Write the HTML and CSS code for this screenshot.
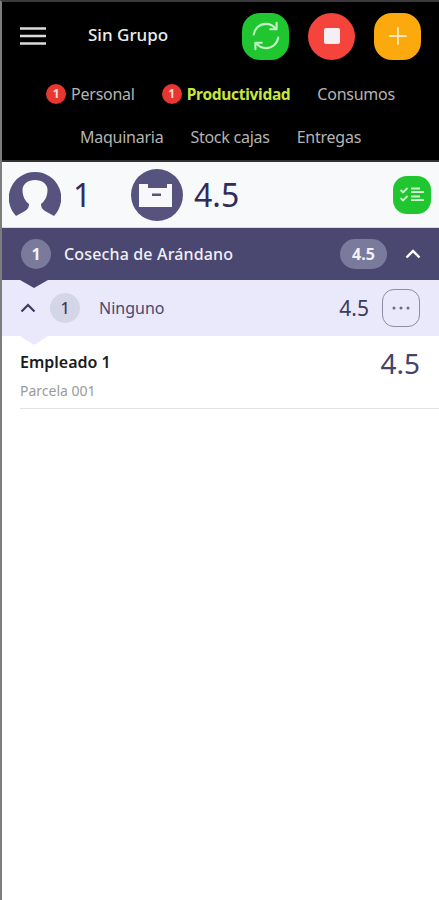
FILE: index.html
```html
<!DOCTYPE html>
<html lang="es">
<head>
    <meta charset="UTF-8">
    <meta name="viewport" content="width=device-width, initial-scale=1.0">
    <title>Sin Grupo</title>
    <link rel="stylesheet" href="styles.css">
</head>
<body>
    <div class="page">
        <header class="topbar">
            <div class="toolbar">
                <button class="menu-btn" aria-label="Menu">
                    <svg width="26" height="18" viewBox="0 0 26 18"><path d="M0 1.500h26M0 9h26M0 16.500h26" stroke="#dcdcdc" stroke-width="2.600" fill="none"/></svg>
                </button>
                <span class="group-name">Sin Grupo</span>
                <div class="actions">
                    <button class="squircle green" aria-label="Sincronizar">
                        <svg width="34" height="34" viewBox="0 0 32 32" fill="none" stroke="#c4f2c6" stroke-width="2" stroke-linecap="round" stroke-linejoin="round"><path d="M4.500 14.500C5.500 8.500 10.200 4.600 16 4.600c3.600 0 6.600 1.500 8.800 4.200"/><path d="M26 3.600v6h-6"/><path d="M27.500 17.500c-1 6-5.700 9.900-11.500 9.900-3.600 0-6.600-1.500-8.800-4.200"/><path d="M6 28.400v-6h6"/></svg>
                    </button>
                    <button class="round red" aria-label="Detener"><span class="stop"></span></button>
                    <button class="squircle orange" aria-label="Agregar">
                        <svg width="18" height="18" viewBox="0 0 18 18"><path d="M9 1v16M1 9h16" stroke="#ffe9b8" stroke-width="1.800" stroke-linecap="round"/></svg>
                    </button>
                </div>
            </div>
            <nav class="tabs">
                <div class="tab-row">
                    <a class="tab"><span class="dot">1</span>Personal</a>
                    <a class="tab active"><span class="dot">1</span>Productividad</a>
                    <a class="tab">Consumos</a>
                </div>
                <div class="tab-row second">
                    <a class="tab">Maquinaria</a>
                    <a class="tab">Stock cajas</a>
                    <a class="tab">Entregas</a>
                </div>
            </nav>
        </header>

        <section class="totals">
            <svg class="avatar" width="52" height="46" viewBox="0 0 52 46">
                <path fill="#56537f" d="M26 0A26 26 0 0 1 45 44L36 39C33 37 32 35 32 32C36 29 38.500 24 38.500 18C38.500 12 33 8 26 8C19 8 13.500 12 13.500 18C13.500 24 16 29 20 32C20 35 19 37 16 39L7 44A26 26 0 0 1 26 0z"/>
            </svg>
            <span class="total-num first">1</span>
            <svg class="box" width="52" height="52" viewBox="0 0 52 52">
                <circle cx="26" cy="26" r="26" fill="#56537f"/>
                <path fill="#f8f8fb" d="M8 15h9v4h19v-4h5v23H8z"/>
                <rect x="21" y="24.500" width="9" height="2.500" fill="#56537f"/>
            </svg>
            <span class="total-num">4.5</span>
            <button class="squircle list-btn" aria-label="Lista">
                <svg width="24" height="15" viewBox="0 0 24 15" fill="none" stroke="#cdf3cf" stroke-width="1.800"><path d="M0.500 3l2.500 2.500L7.500 1M0.500 11l2.500 2.500L7.500 9"/><path d="M11 1.500h9M11 5h13M11 9.500h9M11 13h13"/></svg>
            </button>
        </section>

        <section class="crop-row">
            <span class="count light">1</span>
            <span class="crop-name">Cosecha de Arándano</span>
            <span class="pill">4.5</span>
            <svg class="chevron" width="16" height="10" viewBox="0 0 16 10"><path d="M1.500 8.500L8 2l6.500 6.500" stroke="#fff" stroke-width="2.400" fill="none"/></svg>
        </section>

        <section class="sub-row">
            <svg class="sub-chevron" width="16" height="10" viewBox="0 0 16 10"><path d="M1.500 8.500L8 2l6.500 6.500" stroke="#3d3a63" stroke-width="2.200" fill="none"/></svg>
            <span class="count soft">1</span>
            <span class="sub-name">Ninguno</span>
            <span class="sub-total">4.5</span>
            <button class="more" aria-label="Opciones">
                <svg width="18" height="4" viewBox="0 0 18 4" fill="#6c6a8a"><circle cx="2" cy="2" r="1.500"/><circle cx="9" cy="2" r="1.500"/><circle cx="16" cy="2" r="1.500"/></svg>
            </button>
        </section>

        <section class="employee">
            <div class="employee-info">
                <div class="employee-name">Empleado 1</div>
                <div class="employee-plot">Parcela 001</div>
            </div>
            <span class="employee-total">4.5</span>
        </section>
    </div>
</body>
</html>
```

FILE: styles.css
```css
* {
    box-sizing: border-box;
}
html, body {
    margin: 0;
    height: 100%;
    background: #fff;
}
body {
    font-family: "Noto Sans", "Open Sans", sans-serif;
}
button {
    border: 0;
    padding: 0;
    background: none;
    display: flex;
    align-items: center;
    justify-content: center;
}
.page {
    height: 900px;
    border-left: 2px solid #7d7d7d;
    border-top: 2px solid #3a3a3a;
    overflow: hidden;
}

/* barra superior */
.topbar {
    height: 160px;
    background: #000;
    border-bottom: 2px solid #333;
}
.toolbar {
    display: flex;
    align-items: center;
    height: 68px;
    padding: 0 0 0 18px;
}
.menu-btn {
    width: 26px;
    height: 18px;
}
.group-name {
    margin: -4px 0 0 42px;
    font-size: 17px;
    font-weight: 500;
    color: #ececec;
}
.actions {
    display: flex;
    gap: 19px;
    margin-left: auto;
    margin-right: 18px;
}
.squircle {
    width: 47px;
    height: 47px;
    border-radius: 18px;
}
.round {
    width: 47px;
    height: 47px;
    border-radius: 50%;
}
.green {
    background: #1fc62f;
}
.red {
    background: #f4443b;
}
.orange {
    background: #fba90d;
}
.stop {
    width: 16px;
    height: 16px;
    border-radius: 2px;
    background: #f5eef2;
}

.tabs {
    padding-top: 12px;
    color: #b4b4b4;
    font-size: 16px;
    letter-spacing: -0.25px;
}
.tab-row {
    display: flex;
    justify-content: center;
    align-items: center;
    gap: 27px;
    height: 24px;
}
.tab-row.second {
    margin-top: 19px;
}
.tab {
    display: flex;
    align-items: center;
}
.tab.active {
    color: #c8e63c;
    font-size: 15.500px;
    font-weight: 700;
    letter-spacing: -0.3px;
}
.dot {
    width: 20px;
    height: 20px;
    margin-right: 5px;
    border-radius: 50%;
    background: #e8372f;
    color: #f3dcdc;
    font-size: 12px;
    font-weight: 700;
    letter-spacing: 0;
    line-height: 20px;
    text-align: center;
}

/* totales */
.totals {
    display: flex;
    align-items: center;
    height: 66px;
    padding: 0 8px 0 7px;
    background: #f8f9fb;
    border-bottom: 1px solid #d8d8e0;
    color: #2f2c5c;
}
.total-num {
    margin-left: 11px;
    font-size: 32px;
}
.total-num.first {
    width: 58px;
    margin-left: 12px;
}
.list-btn {
    width: 38px;
    height: 38px;
    margin-left: auto;
    border-radius: 14px;
    background: #1fc62f;
}

/* cultivo */
.crop-row {
    position: relative;
    display: flex;
    align-items: center;
    height: 52px;
    padding: 0 19px;
    background: #4a4770;
    color: #f0f0f6;
}
.crop-row::after {
    content: "";
    position: absolute;
    left: 18px;
    bottom: -8px;
    border-left: 14px solid transparent;
    border-right: 14px solid transparent;
    border-top: 8px solid #4a4770;
    z-index: 1;
}
.count {
    width: 30px;
    height: 30px;
    border-radius: 50%;
    font-size: 16px;
    font-weight: 700;
    line-height: 30px;
    text-align: center;
}
.count.light {
    background: #7a7a9c;
    color: #f2f2f8;
}
.count.soft {
    margin-left: 14px;
    background: #d4d6e8;
    color: #3d3a63;
    font-weight: 500;
}
.crop-name {
    margin-left: 13px;
    font-size: 16px;
    font-weight: 500;
    letter-spacing: 0.15px;
}
.pill {
    width: 47px;
    height: 30px;
    margin-left: auto;
    border-radius: 15px;
    background: #7a7a9c;
    font-size: 16px;
    font-weight: 700;
    line-height: 30px;
    text-align: center;
}
.chevron {
    margin-left: 18px;
    margin-right: -1px;
}

/* subgrupo */
.sub-row {
    position: relative;
    display: flex;
    align-items: center;
    height: 56px;
    padding: 0 19px 0 18px;
    background: #e9e9fb;
}
.sub-row::after {
    content: "";
    position: absolute;
    left: 18px;
    bottom: -9px;
    border-left: 14px solid transparent;
    border-right: 14px solid transparent;
    border-top: 9px solid #e9e9fb;
}
.sub-name {
    margin-left: 19px;
    font-size: 16px;
    color: #4a4770;
}
.sub-total {
    margin-left: auto;
    font-size: 21px;
    color: #3d3a63;
}
.more {
    width: 38px;
    height: 38px;
    margin-left: 13px;
    border: 1px solid #8c8ca4;
    border-radius: 12px;
}

/* empleado */
.employee {
    display: flex;
    justify-content: space-between;
    height: 73px;
    margin-left: 18px;
    padding: 15px 19px 0 0;
    border-bottom: 1px solid #e2e2e2;
}
.employee-name {
    font-size: 16px;
    font-weight: 600;
    color: #1c1c1c;
}
.employee-plot {
    margin-top: 8px;
    font-size: 14px;
    color: #9a9a9a;
}
.employee-total {
    margin-top: -2px;
    font-size: 28px;
    line-height: 28px;
    color: #45426c;
}
```
